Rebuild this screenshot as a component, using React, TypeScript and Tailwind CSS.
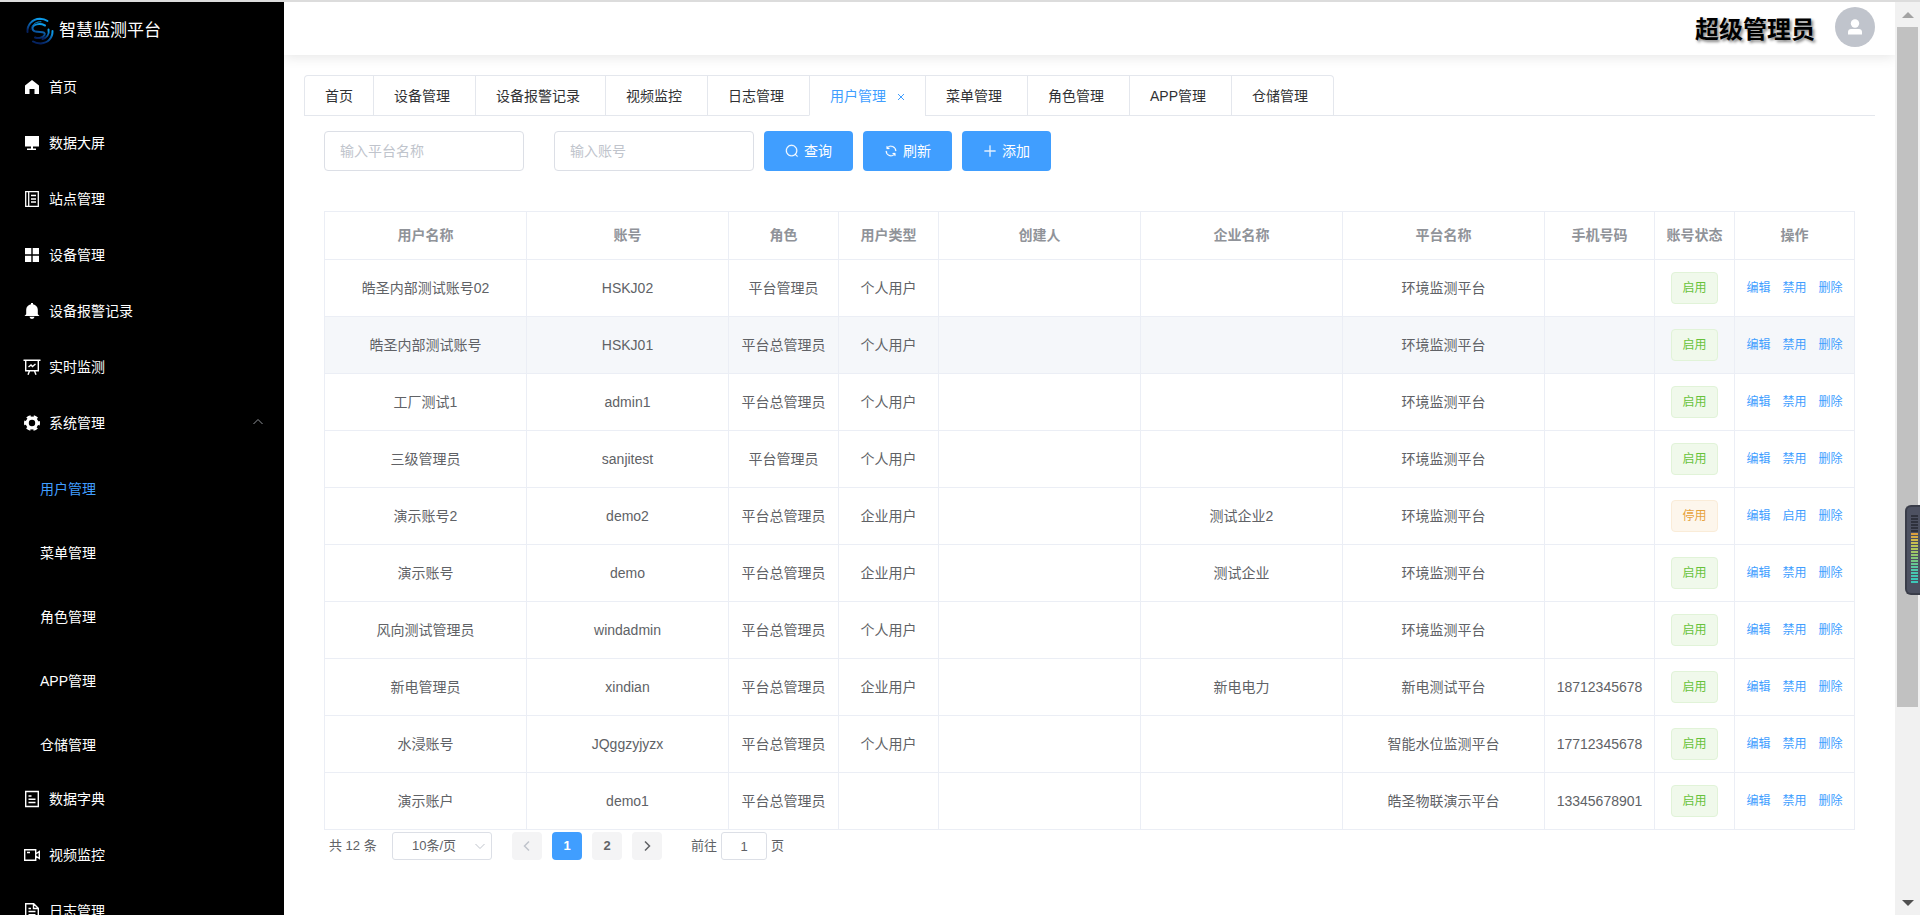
import React from "react";

type IconProps = { className?: string };

const SearchIcon = ({ className = "size-4" }: IconProps) => (
  <svg viewBox="0 0 1024 1024" fill="currentColor" className={className} aria-hidden="true">
    <path d="m795.904 750.72 124.992 124.928a32 32 0 0 1-45.248 45.248L750.656 795.904a416 416 0 1 1 45.248-45.248zM480 832a352 352 0 1 0 0-704 352 352 0 0 0 0 704z" />
  </svg>
);
const RefreshIcon = ({ className = "size-4" }: IconProps) => (
  <svg viewBox="0 0 1024 1024" fill="currentColor" className={className} aria-hidden="true">
    <path d="M771.776 794.88A384 384 0 0 1 128 512h64a320 320 0 0 0 555.712 216.448H654.72a32 32 0 1 1 0-64h149.056a32 32 0 0 1 32 32v148.928a32 32 0 1 1-64 0v-50.56zM276.288 295.616h92.992a32 32 0 0 1 0 64H220.16a32 32 0 0 1-32-32V178.56a32 32 0 0 1 64 0v50.56A384 384 0 0 1 896.128 512h-64a320 320 0 0 0-555.776-216.384z" />
  </svg>
);
const PlusIcon = ({ className = "size-4" }: IconProps) => (
  <svg viewBox="0 0 1024 1024" fill="currentColor" className={className} aria-hidden="true">
    <path d="M480 480V128a32 32 0 0 1 64 0v352h352a32 32 0 1 1 0 64H544v352a32 32 0 1 1-64 0V544H128a32 32 0 0 1 0-64h352z" />
  </svg>
);
const Chevron = ({ className = "size-3", d }: IconProps & { d: string }) => (
  <svg viewBox="0 0 12 12" fill="none" stroke="currentColor" className={className} aria-hidden="true">
    <path d={d} />
  </svg>
);

const Logo = () => (
  <svg viewBox="0 0 28 28" fill="none" strokeLinecap="round" className="size-7" aria-hidden="true">
    <defs>
      <linearGradient id="logo" x1="0.6" y1="0" x2="0.35" y2="1">
        <stop offset="0" stopColor="#0d9be8" />
        <stop offset="0.5" stopColor="#0b5ea8" />
        <stop offset="1" stopColor="#05205e" />
      </linearGradient>
    </defs>
    <g stroke="url(#logo)" strokeWidth="2">
      <path d="M1.500 15C1 8 6 2 14 1.700c3 0 5.500 .8 7.500 2.300" />
      <path d="M19 8.500C14 6 6.500 7 6.500 11.500c0 3 3 3.500 7.500 3.500 3.500 0 5.500 .8 4.500 3-1.500 3-6 3.700-9.500 2.500" />
      <path d="M26.500 14c.2 7-4.500 12-11.500 12.400-3 .1-6-.6-8-1.900" />
      <path d="M22.500 12.500c1 5-2 8.500-6 9.500" />
      <path d="M5 12.500C6 6.500 11 4.500 15 4.800" strokeWidth="1" />
    </g>
  </svg>
);

const menuIcons: Record<string, React.ReactNode> = {
  home: <path fill="currentColor" d="M9 2 2 7.500V16h4.500v-5h5v5H16V7.500z" />,
  screen: <path fill="currentColor" d="M2 2h14v10.500H2zM8 12h2v2.500h3V16H4v-1.500h4z" />,
  notebook: (
    <g fill="none" stroke="currentColor" strokeWidth="1.300">
      <path d="M2.700 1.700h12.600v14.600H2.700zM5.700 1.700v14.600M8 5.500h5M8 9h5M8 12h5" />
    </g>
  ),
  grid: <path fill="currentColor" d="M2 2h6.300v6.300H2zM9.700 2H16v6.300H9.700zM2 9.700h6.300V16H2zM9.700 9.700H16V16H9.700z" />,
  bell: <path fill="currentColor" d="M8 1h2v1.200c2.900.5 4.800 2.700 4.800 5.500v4.600L16.500 14h-15l1.700-1.700V7.700C3.200 4.900 5.100 2.700 8 2.200zM6.500 14.800h5a2.500 2.100 0 0 1-5 0z" />,
  board: (
    <g fill="none" stroke="currentColor" strokeWidth="1.400">
      <path d="M.5 2.200h17M2.700 2.500v10.300h12.600V2.500M6.500 13l-1.500 3.700M11.500 13l1.500 3.700" />
      <path d="m5.500 9 2.500-2 1.500 1.500L12.500 6" />
    </g>
  ),
  gear: (
    <g fill="none" stroke="currentColor">
      <circle cx="9" cy="9" r="4.800" strokeWidth="3.200" />
      <circle cx="9" cy="9" r="6.900" strokeWidth="2.200" strokeDasharray="4.200 3.025" strokeDashoffset="2.100" />
    </g>
  ),
  dictionary: (
    <g fill="none" stroke="currentColor" strokeWidth="1.400">
      <path d="M2.700 1.500h12.600v15H2.700zM5.500 6h3M5.500 9.200h7M5.500 12.500h7" />
    </g>
  ),
  video: (
    <g fill="none" stroke="currentColor" strokeWidth="1.400">
      <path d="M1.700 3.700h11v10.600h-11zM4 6.500h3M12.700 8l3.600-2.500v7L12.700 10" />
    </g>
  ),
  log: (
    <g fill="none" stroke="currentColor" strokeWidth="1.400">
      <path d="M2.700 1.700h8l4.600 4.600v10H2.700zM10.500 1.700v4.800h4.800M5.500 6.500h2.500M5.500 9.500h7M5.500 12.700h7" />
    </g>
  ),
};

type MenuEntry = { icon: string; label: string; children?: string[] };
const menu: MenuEntry[] = [
  { icon: "home", label: "首页" },
  { icon: "screen", label: "数据大屏" },
  { icon: "notebook", label: "站点管理" },
  { icon: "grid", label: "设备管理" },
  { icon: "bell", label: "设备报警记录" },
  { icon: "board", label: "实时监测" },
  { icon: "gear", label: "系统管理", children: ["用户管理", "菜单管理", "角色管理", "APP管理", "仓储管理"] },
  { icon: "dictionary", label: "数据字典" },
  { icon: "video", label: "视频监控" },
  { icon: "log", label: "日志管理" },
];

const tabs = ["首页", "设备管理", "设备报警记录", "视频监控", "日志管理", "用户管理", "菜单管理", "角色管理", "APP管理", "仓储管理"];

const columns = [
  { title: "用户名称" },
  { title: "账号" },
  { title: "角色", width: "w-[110px]" },
  { title: "用户类型", width: "w-[100px]" },
  { title: "创建人" },
  { title: "企业名称" },
  { title: "平台名称" },
  { title: "手机号码", width: "w-[110px]" },
  { title: "账号状态", width: "w-20" },
  { title: "操作", width: "w-[120px]" },
];

type User = { cells: string[]; enabled: boolean };
const users: User[] = [
  { cells: ["皓圣内部测试账号02", "HSKJ02", "平台管理员", "个人用户", "", "", "环境监测平台", ""], enabled: true },
  { cells: ["皓圣内部测试账号", "HSKJ01", "平台总管理员", "个人用户", "", "", "环境监测平台", ""], enabled: true },
  { cells: ["工厂测试1", "admin1", "平台总管理员", "个人用户", "", "", "环境监测平台", ""], enabled: true },
  { cells: ["三级管理员", "sanjitest", "平台管理员", "个人用户", "", "", "环境监测平台", ""], enabled: true },
  { cells: ["演示账号2", "demo2", "平台总管理员", "企业用户", "", "测试企业2", "环境监测平台", ""], enabled: false },
  { cells: ["演示账号", "demo", "平台总管理员", "企业用户", "", "测试企业", "环境监测平台", ""], enabled: true },
  { cells: ["风向测试管理员", "windadmin", "平台总管理员", "个人用户", "", "", "环境监测平台", ""], enabled: true },
  { cells: ["新电管理员", "xindian", "平台总管理员", "企业用户", "", "新电电力", "新电测试平台", "18712345678"], enabled: true },
  { cells: ["水浸账号", "JQggzyjyzx", "平台总管理员", "个人用户", "", "", "智能水位监测平台", "17712345678"], enabled: true },
  { cells: ["演示账户", "demo1", "平台总管理员", "", "", "", "皓圣物联演示平台", "13345678901"], enabled: true },
];

function Sidebar() {
  return (
    <aside className="w-[284px] shrink-0 overflow-hidden bg-black text-sm text-white">
      <div className="flex h-[57px] items-center gap-1 pl-[26px]">
        <Logo />
        <span className="pt-0.5 pl-px text-[17px]">智慧监测平台</span>
      </div>
      <nav>
        {menu.map((item) => (
          <div key={item.label}>
            <a href="#" className="flex h-14 items-center gap-2 pr-5 pl-[23px]">
              <svg viewBox="0 0 18 18" className="size-[18px]" aria-hidden="true">
                {menuIcons[item.icon]}
              </svg>
              <span className="grow">{item.label}</span>
              {item.children && <Chevron className="size-3 text-[#909399]" d="m1.500 7 4.500-4.500L10.500 7" />}
            </a>
            {item.children?.map((child, i) => (
              <a key={child} href="#" className={`flex h-16 items-center pt-3 pl-10 ${i === 0 ? "text-[#409eff]" : ""}`}>
                {child}
              </a>
            ))}
          </div>
        ))}
      </nav>
    </aside>
  );
}

function Tabs() {
  return (
    <div className="flex h-[41px] border-b border-[#e4e7ed] text-sm text-[#303133]">
      <div className="flex h-[41px] rounded-t border border-b-0 border-[#e4e7ed]" role="tablist">
        {tabs.map((tab, i) => {
          const active = tab === "用户管理";
          return (
            <div
              key={tab}
              className={`flex items-center border-b px-5 ${i > 0 ? "border-l border-l-[#e4e7ed]" : ""} ${
                active ? "border-b-white text-[#409eff]" : "border-b-[#e4e7ed]"
              }`}
            >
              <button role="tab" aria-selected={active} className={i > 0 ? "mr-[5px]" : ""}>
                {tab}
              </button>
              {active && (
                <button aria-label="关闭" className="flex size-3.5 items-center justify-end pt-0.5">
                  <svg viewBox="0 0 8 8" stroke="currentColor" className="size-2" aria-hidden="true">
                    <path d="m1 1 6 6M7 1 1 7" />
                  </svg>
                </button>
              )}
            </div>
          );
        })}
      </div>
    </div>
  );
}

function Toolbar() {
  const input = "h-10 w-[200px] rounded border border-[#dcdfe6] px-[15px] text-sm placeholder:text-[#c0c4cc]";
  const button = "flex h-10 w-[89px] items-center justify-center gap-[5px] rounded bg-[#409eff] text-sm text-white";
  const icon = "size-3.5 stroke-current stroke-[20]";
  return (
    <form className="flex" onSubmit={(e) => e.preventDefault()}>
      <input aria-label="平台名称" placeholder="输入平台名称" className={input} />
      <input aria-label="账号" placeholder="输入账号" className={`${input} ml-[30px]`} />
      <div className="ml-2.5 flex gap-2.5">
        <button className={button}><SearchIcon className={icon} />查询</button>
        <button type="button" className={button}><RefreshIcon className={icon} />刷新</button>
        <button type="button" className={button}><PlusIcon className={icon} />添加</button>
      </div>
    </form>
  );
}

function UserTable() {
  const line = "border border-[#ebeef5]";
  return (
    <table className="w-full table-fixed border-collapse text-center text-sm text-[#606266]">
      <thead>
        <tr className="h-12 text-[#909399]">
          {columns.map((c) => (
            <th key={c.title} className={`${line} pb-0.5 font-bold ${c.width ?? ""}`}>{c.title}</th>
          ))}
        </tr>
      </thead>
      <tbody>
        {users.map((user, row) => (
          <tr key={user.cells[1]} className={`h-[57px] ${row === 1 ? "bg-[#f5f7fa]" : ""}`}>
            {user.cells.map((cell, i) => (
              <td key={i} className={`${line} whitespace-nowrap`}>{cell}</td>
            ))}
            <td className={line}>
              <span
                className={`inline-flex h-8 items-center rounded border px-2.5 align-middle text-xs ${
                  user.enabled ? "border-[#e1f3d8] bg-[#f0f9eb] text-[#67c23a]" : "border-[#faecd8] bg-[#fdf6ec] text-[#e6a23c]"
                }`}
              >
                {user.enabled ? "启用" : "停用"}
              </span>
            </td>
            <td className={line}>
              <div className="flex justify-center gap-3 text-xs text-[#409eff]">
                <button>编辑</button>
                <button>{user.enabled ? "禁用" : "启用"}</button>
                <button>删除</button>
              </div>
            </td>
          </tr>
        ))}
      </tbody>
    </table>
  );
}

function Pagination() {
  const page = "flex h-7 w-[30px] items-center justify-center rounded-sm font-bold";
  return (
    <div className="flex h-7 items-center px-[5px] text-[13px] text-[#606266]">
      <span className="w-[63px]">共 12 条</span>
      <div className="relative">
        <select aria-label="每页条数" className="h-7 w-[100px] appearance-none rounded-[3px] border border-[#dcdfe6] bg-white pl-[19px]">
          <option>10条/页</option>
        </select>
        <Chevron className="pointer-events-none absolute top-2 right-1.5 size-3 text-[#c0c4cc]" d="m1.500 4 4.500 4.500L10.500 4" />
      </div>
      <div className="ml-5 flex gap-2.5">
        <button aria-label="上一页" className={`${page} bg-[#f4f4f5] text-[#c0c4cc]`}>
          <Chevron className="size-3 stroke-[1.5]" d="M8 1.500 3.500 6 8 10.500" />
        </button>
        <button className={`${page} bg-[#409eff] text-white`}>1</button>
        <button className={`${page} bg-[#f4f4f5]`}>2</button>
        <button aria-label="下一页" className={`${page} bg-[#f4f4f5]`}>
          <Chevron className="size-3 stroke-[1.5]" d="M4 1.500 8.500 6 4 10.500" />
        </button>
      </div>
      <label className="ml-[29px] flex items-center gap-1">
        前往
        <input defaultValue="1" className="h-7 w-[46px] rounded-[3px] border border-[#dcdfe6] text-center" />
        页
      </label>
    </div>
  );
}

function ScrollTrack() {
  return (
    <div className="flex w-[25px] shrink-0 flex-col items-center bg-[#f1f1f1]" aria-hidden="true">
      <div className="flex h-[25px] items-center">
        <svg viewBox="0 0 12 6" className="h-1.5 w-3 fill-[#a3a3a3]"><path d="M6 0 12 6H0z" /></svg>
      </div>
      <div className="h-[calc(75%-5px)] w-[21px] bg-[#c1c1c1]" />
      <div className="mt-auto flex h-[25px] items-center">
        <svg viewBox="0 0 12 6" className="h-1.5 w-3 fill-[#505050]"><path d="M0 0h12L6 6z" /></svg>
      </div>
    </div>
  );
}

const levels = [
  ...Array<string>(6).fill("bg-[#2f323d]"),
  "bg-[#dca03c]", "bg-[#d5ac45]", "bg-[#d0b84a]", "bg-[#c8bf50]", "bg-[#bcc455]", "bg-[#b0c65c]",
  "bg-[#a2c765]", "bg-[#93c86e]", "bg-[#84c878]", "bg-[#74c885]", "bg-[#66c892]", "bg-[#5ac8a0]",
  "bg-[#50c8aa]", "bg-[#48c8b0]", "bg-[#42c8b4]", "bg-[#3cc8b8]", "bg-[#3cc8b8]",
];

function LevelMeter() {
  return (
    <div className="absolute top-[503px] right-0 flex h-[90px] w-[15px] flex-col gap-px rounded-l-md border-2 border-r-0 border-[#3a3d49] bg-[#4d5161] pt-2 pl-1" aria-hidden="true">
      {levels.map((color, i) => (
        <span key={i} className={`h-0.5 w-[7px] ${color}`} />
      ))}
    </div>
  );
}

export default function App() {
  return (
    <div className="relative flex h-screen flex-col overflow-hidden border-t-2 border-[#dcdcdc] bg-white font-['Liberation_Sans','Noto_Sans_CJK_SC',sans-serif]">
      <div className="flex min-h-0 grow">
        <Sidebar />
        <div className="flex min-w-0 grow flex-col overflow-hidden">
          <header className="flex h-[53px] shrink-0 items-center justify-end gap-5 pr-5 shadow-[0_2px_12px_rgba(0,0,0,0.1)]">
            <span className="pt-0.5 text-2xl font-bold text-black [text-shadow:2px_2px_3px_#808080]">超级管理员</span>
            <span className="mb-2 flex size-10 items-center justify-center self-end rounded-full bg-[#c0c4cc] text-white">
              <svg viewBox="0 0 14 16" fill="currentColor" className="h-4 w-3.5" aria-hidden="true">
                <circle cx="7" cy="4.500" r="4.200" />
                <path d="M0 15.500V13c0-2 1.300-3 3-3h8c1.700 0 3 1 3 3v2.500z" />
              </svg>
            </span>
          </header>
          <main className="px-5 pt-5">
            <Tabs />
            <section className="px-5 pt-[15px]">
              <Toolbar />
              <div className="mt-10">
                <UserTable />
              </div>
              <div className="mt-0.5">
                <Pagination />
              </div>
            </section>
          </main>
        </div>
        <ScrollTrack />
      </div>
      <LevelMeter />
    </div>
  );
}
